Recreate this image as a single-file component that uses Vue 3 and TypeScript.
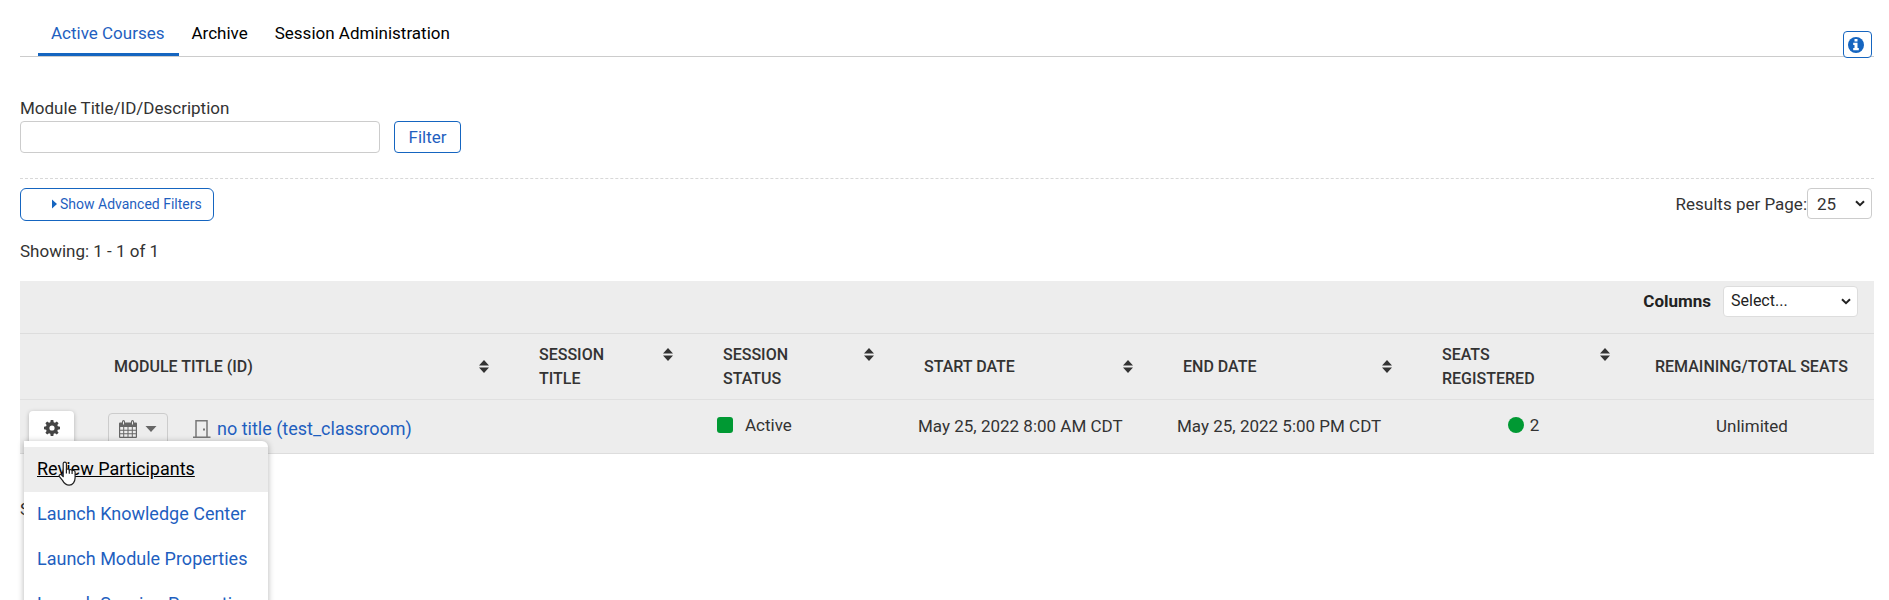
<script setup lang="ts">
import { ref } from 'vue'

interface Column {
  key: string
  label: string
  sortable: boolean
}

interface Session {
  id: number
  title: string
  status: string
  start: string
  end: string
  registered: number
  seats: string
}

const tabs = ['Active Courses', 'Archive', 'Session Administration']
const activeTab = ref(tabs[0])
const query = ref('')
const perPage = ref('25')
const columnChoice = ref('')

const columns: Column[] = [
  { key: 'module', label: 'Module Title (ID)', sortable: true },
  { key: 'session', label: 'Session Title', sortable: true },
  { key: 'status', label: 'Session Status', sortable: true },
  { key: 'start', label: 'Start Date', sortable: true },
  { key: 'end', label: 'End Date', sortable: true },
  { key: 'registered', label: 'Seats Registered', sortable: true },
  { key: 'seats', label: 'Remaining/Total Seats', sortable: false },
]

const sessions: Session[] = [
  {
    id: 1,
    title: 'no title (test_classroom)',
    status: 'Active',
    start: 'May 25, 2022 8:00 AM CDT',
    end: 'May 25, 2022 5:00 PM CDT',
    registered: 2,
    seats: 'Unlimited',
  },
]

const actions = [
  'Review Participants',
  'Launch Knowledge Center',
  'Launch Module Properties',
  'Launch Session Properties',
]
const hovered = ref(actions[0])
</script>

<template>
  <main class="page">
    <nav class="tabs">
      <a
        v-for="tab in tabs"
        :key="tab"
        href="#"
        class="tab"
        :class="{ active: tab === activeTab }"
        @click.prevent="activeTab = tab"
      >{{ tab }}</a>
      <button type="button" class="info" aria-label="Information">
        <svg width="16" height="16" viewBox="0 0 16 16" aria-hidden="true">
          <circle cx="8" cy="8" r="8" fill="#1565c0" />
          <path d="M6.500 2h3v2.500h-3zM5.200 5.700h4.300v5.300h1.300v2.200H5.200V11h1.300V7.900H5.200z" fill="#fff" />
        </svg>
      </button>
    </nav>

    <form class="search" @submit.prevent>
      <label for="module-query">Module Title/ID/Description</label>
      <div class="search-row">
        <input id="module-query" v-model="query" type="text" class="field" />
        <button type="submit" class="filter">Filter</button>
      </div>
    </form>

    <div class="options">
      <button type="button" class="advanced">
        <svg width="5" height="10" viewBox="0 0 5 10" aria-hidden="true">
          <path d="M0 0.5L5 5L0 9.5z" fill="#1565c0" />
        </svg>
        Show Advanced Filters
      </button>
      <div class="per-page">
        <label for="per-page">Results per Page:</label>
        <span class="picker">
          <select id="per-page" v-model="perPage">
            <option>25</option>
            <option>50</option>
            <option>100</option>
          </select>
          <svg class="chevron" width="10" height="7" viewBox="0 0 10 7" aria-hidden="true">
            <path d="M1 1.200l4 4 4-4" fill="none" stroke="#222" stroke-width="2" />
          </svg>
        </span>
      </div>
    </div>

    <p class="showing">Showing: 1 - 1 of 1</p>

    <section class="grid">
      <div class="grid-bar">
        <label for="columns">Columns</label>
        <span class="picker wide">
          <select id="columns" v-model="columnChoice">
            <option value="">Select...</option>
          </select>
          <svg class="chevron" width="10" height="7" viewBox="0 0 10 7" aria-hidden="true">
            <path d="M1 1.200l4 4 4-4" fill="none" stroke="#222" stroke-width="2" />
          </svg>
        </span>
      </div>
      <table>
        <colgroup>
          <col class="c-actions" />
          <col v-for="column in columns" :key="column.key" :class="`c-${column.key}`" />
        </colgroup>
        <thead>
          <tr>
            <td></td>
            <th v-for="column in columns" :key="column.key" scope="col">
              <div class="head">
                <span>{{ column.label }}</span>
                <svg v-if="column.sortable" class="sort" width="10" height="13" viewBox="0 0 10 13" aria-hidden="true">
                  <path d="M5 0L10 5.500H0zM5 13L0 7.500H10z" fill="#333" />
                </svg>
              </div>
            </th>
          </tr>
        </thead>
        <tbody>
          <tr v-for="session in sessions" :key="session.id">
            <td class="actions">
              <button type="button" class="gear" aria-label="Actions" aria-expanded="true">
                <svg width="16" height="16" viewBox="0 0 16 16" aria-hidden="true">
                  <path
                    fill="#444"
                    fill-rule="evenodd"
                    d="M6.700 0h2.600l.4 2.200 1.300.5 1.800-1.200 1.800 1.800-1.300 1.800.5 1.200 2.200.4v2.600l-2.200.4-.5 1.300 1.300 1.800-1.800 1.800-1.800-1.300-1.300.5-.4 2.200H6.700l-.4-2.200-1.300-.5-1.800 1.300-1.800-1.800 1.200-1.800-.5-1.300L0 9.300V6.700l2.100-.4.5-1.200-1.200-1.800 1.800-1.800L5 2.700l1.300-.5zM8 5.400a2.600 2.600 0 1 0 0 5.200 2.600 2.600 0 0 0 0-5.200z"
                  />
                </svg>
              </button>
              <ul class="menu">
                <li v-for="action in actions" :key="action">
                  <a
                    href="#"
                    :class="{ hover: action === hovered }"
                    @mouseenter="hovered = action"
                    @click.prevent
                  >{{ action }}</a>
                </li>
              </ul>
              <svg class="pointer" width="20" height="26" viewBox="0 0 20 26" aria-hidden="true">
                <path
                  d="M5.2 2.6c0-2 3.2-2 3.2 0v6c.8-1 2.6-.7 2.9.4.9-.8 2.5-.4 2.8.7 1-.7 3-.2 3 1.5v5.600c0 3.600-2.200 7.400-6 7.400-4 0-5.200-2.200-6.600-4.800L1.400 15.600c-.9-1.800 1.200-2.900 2.300-1.600l1.500 1.700z"
                  fill="#fff"
                  stroke="#222"
                  stroke-width="1.200"
                  stroke-linejoin="round"
                />
                <path d="M8.400 8.600v4M11.300 9v3.800M14.100 9.700v3.400" fill="none" stroke="#222" stroke-width="1.200" />
              </svg>
            </td>
            <td>
              <div class="module">
                <button type="button" class="calendar" aria-label="Schedule">
                  <svg width="18" height="18" viewBox="0 0 18 18" aria-hidden="true">
                    <path
                      fill="#666"
                      fill-rule="evenodd"
                      d="M1 2.500h2v-1a1.500 1.500 0 0 1 3 0v1h6v-1a1.500 1.500 0 0 1 3 0v1h2a1 1 0 0 1 1 1V17a1 1 0 0 1-1 1H1a1 1 0 0 1-1-1V3.500a1 1 0 0 1 1-1zM1.200 7v2.700h3V7zM5.200 7v2.700h3.300V7zM9.500 7v2.700h3.300V7zM13.800 7v2.700h3V7zM1.200 10.700v2.600h3v-2.600zM5.200 10.700v2.600h3.300v-2.600zM9.500 10.700v2.600h3.300v-2.600zM13.800 10.700v2.600h3v-2.600zM1.200 14.300v2.500h3v-2.500zM5.200 14.300v2.500h3.300v-2.500zM9.500 14.300v2.500h3.300v-2.500zM13.800 14.300v2.500h3v-2.500zM4 1.500v3h1v-3zM13 1.500v3h1v-3z"
                    />
                  </svg>
                  <svg width="12" height="6" viewBox="0 0 12 6" aria-hidden="true">
                    <path d="M0.500 0h11L6 6z" fill="#666" />
                  </svg>
                </button>
                <svg class="door" width="18" height="18" viewBox="0 0 18 18" aria-hidden="true">
                  <path d="M0 17.250h3V.75h11v16.500h3.500M3 17.250h11" fill="none" stroke="#777" stroke-width="1.500" />
                  <path d="M10 8.500h2v2h-2z" fill="#777" />
                </svg>
                <a href="#" class="title" @click.prevent>{{ session.title }}</a>
              </div>
            </td>
            <td></td>
            <td>
              <span class="status"><i class="square"></i>{{ session.status }}</span>
            </td>
            <td>{{ session.start }}</td>
            <td>{{ session.end }}</td>
            <td class="center">
              <span class="count"><i class="dot"></i>{{ session.registered }}</span>
            </td>
            <td class="center">{{ session.seats }}</td>
          </tr>
        </tbody>
      </table>
    </section>

    <p class="showing bottom">Showing: 1 - 1 of 1</p>
  </main>
</template>

<style>
body {
  background: #fff;
}
</style>

<style scoped>
* {
  box-sizing: border-box;
}

.page {
  min-height: 100vh;
  padding: 12px 15px 0 20px;
  overflow: hidden;
  font: 17px/24px Roboto, "Liberation Sans", sans-serif;
  color: #333;
}

button,
input,
select {
  font: inherit;
  color: inherit;
}

a {
  color: #1f5fbf;
  text-decoration: none;
}

button {
  display: flex;
  align-items: center;
  justify-content: center;
  padding: 0;
  border: 1px solid #1565c0;
  border-radius: 4px;
  background: #fff;
  color: #1f5fbf;
}

.tabs {
  display: flex;
  align-items: flex-start;
  height: 45px;
  padding: 0 2px 0 18px;
  border-bottom: 1px solid #ccc;
}

.tab {
  height: 44px;
  padding: 9px 14px 0 13px;
  border-bottom: 3px solid transparent;
  color: #000;
}

.tab.active {
  border-color: #1565c0;
  color: #1f5fbf;
}

.info {
  width: 29px;
  height: 27px;
  margin: 19px 0 0 auto;
  padding-right: 3px;
}

.search {
  padding: 39px 0 25px;
  border-bottom: 1px dashed #d8d8d8;
}

.search-row {
  display: flex;
  gap: 14px;
  margin-top: 1px;
}

.field {
  width: 360px;
  height: 32px;
  padding: 0 8px;
  border: 1px solid #ccc;
  border-radius: 4px;
}

.filter {
  width: 67px;
  height: 32px;
}

.options {
  display: flex;
  justify-content: space-between;
  padding: 9px 2px 0 0;
}

.advanced {
  gap: 3px;
  height: 33px;
  padding: 0 11px 2px 31px;
  border-radius: 6px;
  font-size: 14px;
}

.per-page {
  display: flex;
  align-items: center;
  height: 31px;
}

.picker {
  display: grid;
  align-items: center;
  width: 65px;
  height: 31px;
}

.picker select {
  grid-area: 1 / 1;
  width: 100%;
  height: 100%;
  padding: 0 9px;
  border: 1px solid #ccc;
  border-radius: 4px;
  background: #fff;
  appearance: none;
}

.chevron {
  grid-area: 1 / 1;
  justify-self: end;
  margin-right: 7px;
  pointer-events: none;
}

.picker.wide {
  width: 135px;
}

.picker.wide select {
  padding: 0 7px;
  border-color: #ddd;
  font-size: 16px;
}

.showing {
  margin: 18px 0;
}

.grid {
  background: #ededed;
}

.grid-bar {
  display: flex;
  align-items: center;
  justify-content: flex-end;
  gap: 12px;
  height: 52px;
  padding: 0 16px 12px 0;
  color: #222;
}

.grid-bar label {
  font-weight: 700;
}

table {
  width: 100%;
  border-collapse: separate;
  border-spacing: 0;
  table-layout: fixed;
}

.c-actions {
  width: 69px;
}

.c-session {
  width: 184px;
}

.c-status {
  width: 201px;
}

.c-start,
.c-end {
  width: 259px;
}

.c-registered {
  width: 213px;
}

.c-seats {
  width: 244px;
}

thead th,
thead td {
  height: 66px;
  padding: 9px 25px 8px;
  border-top: 1px solid #ddd;
  text-align: left;
  vertical-align: middle;
  font-size: 16px;
  font-weight: 500;
  text-transform: uppercase;
}

.head {
  display: flex;
  justify-content: space-between;
}

th:nth-child(3) span,
th:nth-child(4) span,
th:nth-child(7) span {
  width: min-content;
}

thead th:nth-child(7) {
  padding-right: 20px;
}

thead th:last-child {
  padding-right: 20px;
  white-space: nowrap;
}

.sort {
  flex: none;
  margin-top: 5px;
}

tbody td {
  height: 55px;
  padding: 0 0 2px 19px;
  border-top: 1px solid #e0e0e0;
  border-bottom: 1px solid #ddd;
  vertical-align: middle;
}

tbody td.center {
  padding: 0 0 2px;
  text-align: center;
}

tbody td.actions {
  position: relative;
  padding: 2px 0 0 9px;
}

.gear {
  width: 45px;
  height: 34px;
  border: 0;
  box-shadow: 0 1px 4px rgba(0, 0, 0, 0.25);
}

.menu {
  position: absolute;
  top: 41px;
  left: 4px;
  z-index: 1;
  width: 244px;
  margin: 0;
  padding: 6px 0;
  border-radius: 0 6px 6px 6px;
  background: #fff;
  box-shadow: 0 1px 6px rgba(0, 0, 0, 0.3);
  list-style: none;
}

.menu a {
  display: block;
  height: 45px;
  padding: 0 13px;
  font-size: 18px;
  line-height: 43px;
}

.menu a.hover {
  background: #ededed;
  color: #000;
  text-decoration: underline;
}

.pointer {
  position: absolute;
  top: 61px;
  left: 38px;
  z-index: 2;
}

.module {
  display: flex;
  align-items: center;
  padding-top: 6px;
  font-size: 18px;
}

.calendar {
  gap: 8px;
  width: 60px;
  height: 32px;
  margin-right: 25px;
  border-color: #ccc;
  background: transparent;
}

.door {
  margin-right: 6px;
}

.status,
.count {
  display: inline-flex;
  align-items: center;
}

.status {
  gap: 12px;
}

.count {
  gap: 6px;
}

.square,
.dot {
  width: 16px;
  height: 16px;
  border-radius: 3px;
  background: #093;
}

.dot {
  border-radius: 50%;
}

.bottom {
  margin-top: 43px;
}
</style>
